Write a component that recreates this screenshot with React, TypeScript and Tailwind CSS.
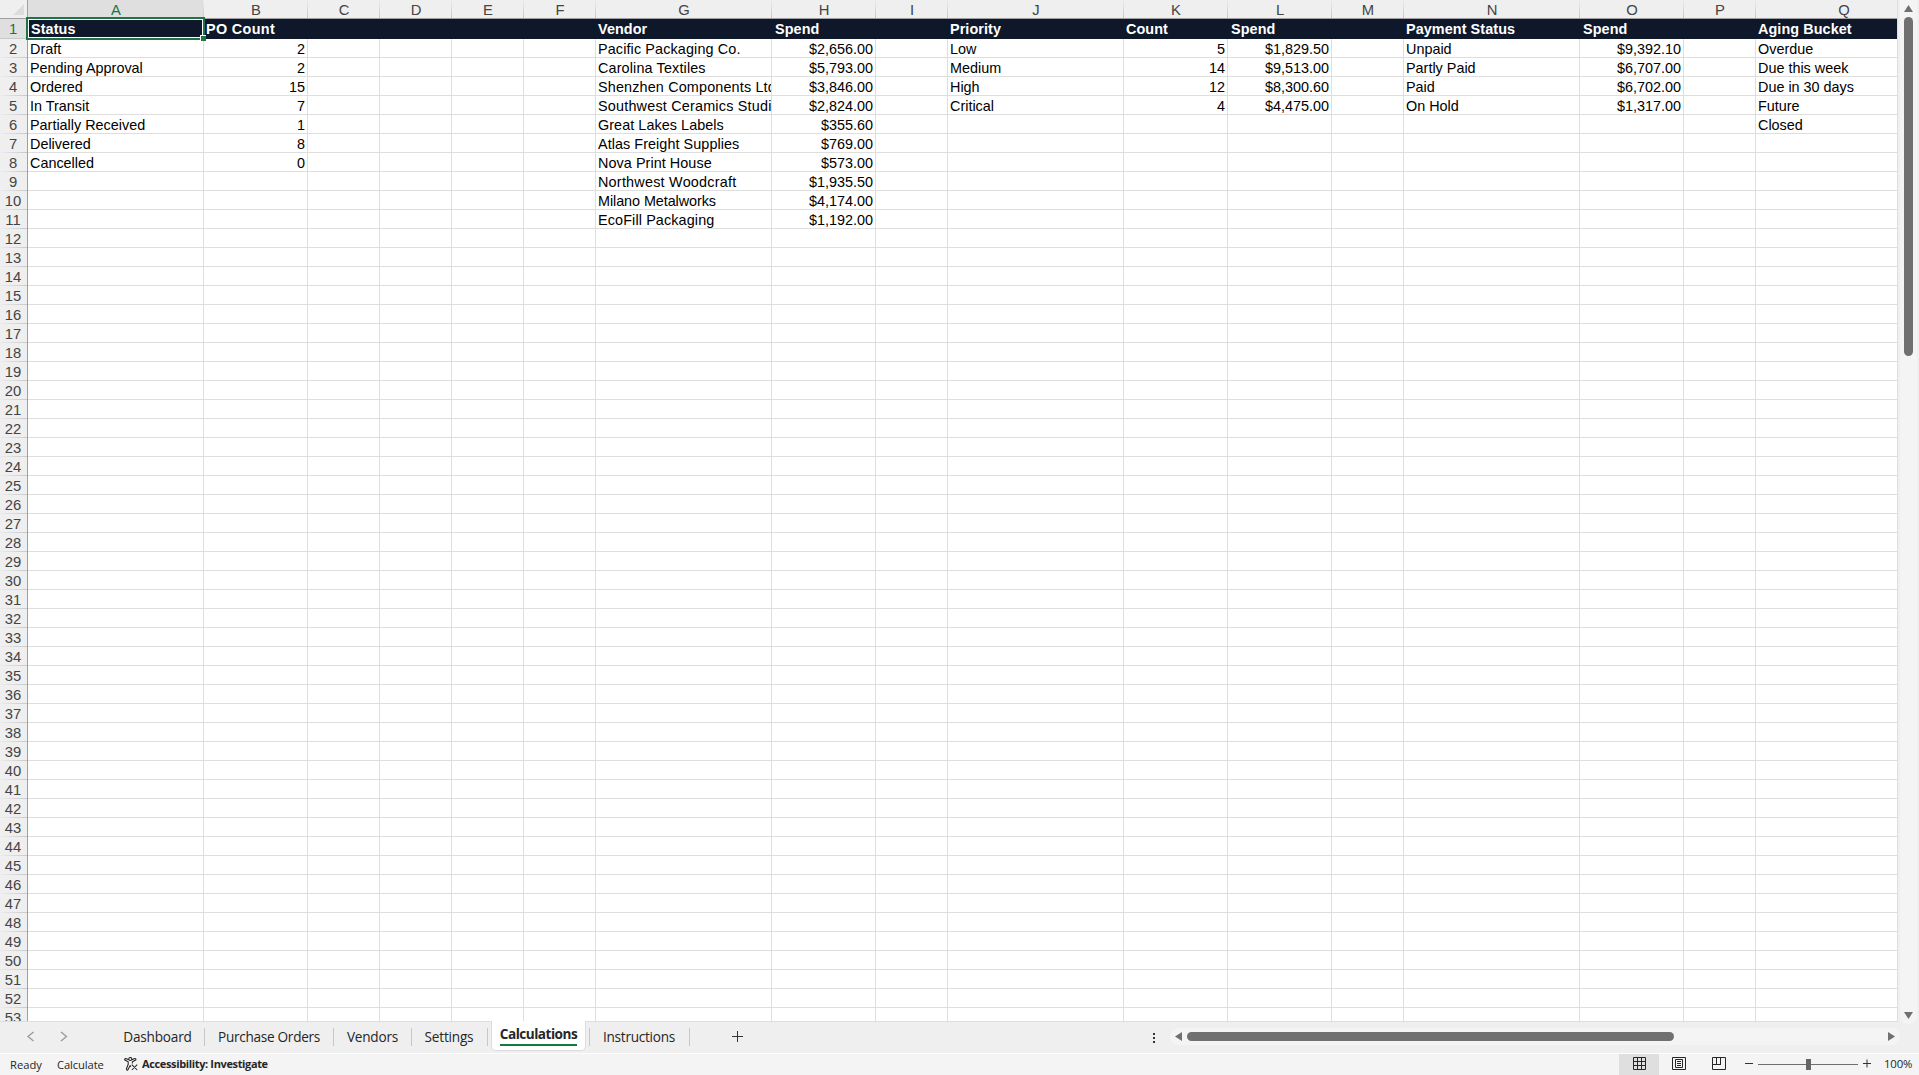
import type { ReactNode } from 'react';

type Column = { letter: string; width: string; numeric?: boolean; head?: string; cells?: string[]; tracking?: string[] };

const columns: Column[] = [
  { letter: 'A', width: 'w-44', head: 'Status', cells: ['Draft', 'Pending Approval', 'Ordered', 'In Transit', 'Partially Received', 'Delivered', 'Cancelled'] },
  { letter: 'B', width: 'w-26', numeric: true, head: 'PO Count', cells: ['2', '2', '15', '7', '1', '8', '0'] },
  { letter: 'C', width: 'w-18' },
  { letter: 'D', width: 'w-18' },
  { letter: 'E', width: 'w-18' },
  { letter: 'F', width: 'w-18' },
  {
    letter: 'G',
    width: 'w-44',
    head: 'Vendor',
    cells: ['Pacific Packaging Co.', 'Carolina Textiles', 'Shenzhen Components Ltd', 'Southwest Ceramics Studio', 'Great Lakes Labels', 'Atlas Freight Supplies', 'Nova Print House', 'Northwest Woodcraft', 'Milano Metalworks', 'EcoFill Packaging'],
    tracking: ['tracking-[0.12px]', 'tracking-[0.14px]', 'tracking-[0.15px]', 'tracking-[0.2px]', 'tracking-[0.06px]', 'tracking-[0.06px]', 'tracking-[0.06px]', 'tracking-[0.23px]', 'tracking-[-0.07px]', 'tracking-[0.12px]'],
  },
  {
    letter: 'H',
    width: 'w-26',
    numeric: true,
    head: 'Spend',
    cells: ['$2,656.00', '$5,793.00', '$3,846.00', '$2,824.00', '$355.60', '$769.00', '$573.00', '$1,935.50', '$4,174.00', '$1,192.00'],
  },
  { letter: 'I', width: 'w-18' },
  { letter: 'J', width: 'w-44', head: 'Priority', cells: ['Low', 'Medium', 'High', 'Critical'] },
  { letter: 'K', width: 'w-26', numeric: true, head: 'Count', cells: ['5', '14', '12', '4'] },
  { letter: 'L', width: 'w-26', numeric: true, head: 'Spend', cells: ['$1,829.50', '$9,513.00', '$8,300.60', '$4,475.00'] },
  { letter: 'M', width: 'w-18' },
  { letter: 'N', width: 'w-44', head: 'Payment Status', cells: ['Unpaid', 'Partly Paid', 'Paid', 'On Hold'] },
  { letter: 'O', width: 'w-26', numeric: true, head: 'Spend', cells: ['$9,392.10', '$6,707.00', '$6,702.00', '$1,317.00'] },
  { letter: 'P', width: 'w-18' },
  { letter: 'Q', width: 'w-44', head: 'Aging Bucket', cells: ['Overdue', 'Due this week', 'Due in 30 days', 'Future', 'Closed'] },
];

const bodyRows = Array.from({ length: 52 }, (_, i) => i);

function RowNumbers() {
  return (
    <div className="w-7 shrink-0 border-r border-[#9f9f9f] bg-[#efefef] text-center text-[14.8px] text-[#444]">
      <div className="flex h-[19px] items-end justify-end border-b border-[#9f9f9f] pr-[3px] pb-[3px]">
        <svg width="11" height="11" viewBox="0 0 11 11"><path d="M11 0V11H0Z" fill="#dcdcdc" /></svg>
      </div>
      <div className="h-5 border-b border-[#c8c8c8] bg-[#dfdfdf] pr-px leading-[20px] text-[#217346]">1</div>
      {bodyRows.map((r) => (
        <div key={r} className="flex h-[19px] flex-col">
          <div className="h-[18px] pr-px leading-[20px]">{r + 2}</div>
          <div className="h-px bg-linear-to-r from-[#ececec] to-[#c8c8c8]" />
        </div>
      ))}
    </div>
  );
}

function SheetColumn({ col }: { col: Column }) {
  const selected = col.letter === 'A';
  return (
    <div className={`${col.width} relative shrink-0`}>
      <div className={`h-[19px] border-b border-[#9f9f9f] text-center text-[14.8px] leading-[20px] ${selected ? 'bg-[#dfdfdf] text-[#217346]' : 'bg-[#efefef] text-[#444]'}`}>
        <div className="flex h-full justify-end">
          <span className="grow pl-px">{col.letter}</span>
          <span className="w-px bg-linear-to-b from-[#ececec] to-[#c8c8c8]" />
        </div>
      </div>
      <div className={`h-5 bg-[#0f172a] text-[14.4px] leading-[20px] font-bold whitespace-nowrap text-white ${col.head?.startsWith('S') ? 'pl-[3px]' : 'pl-0.5'} ${col.letter === 'B' ? 'tracking-[0.35px]' : 'tracking-[0.08px]'}`}>{col.head}</div>
      {bodyRows.map((r) => (
        <div key={r} className={`h-[19px] overflow-hidden border-r border-b border-[#dedede] bg-white pr-0.5 pl-0.5 text-[14.4px] leading-[20px] whitespace-nowrap text-black ${col.numeric ? 'text-right' : ''} ${col.tracking?.[r] ?? ''}`}>
          {col.cells?.[r]}
        </div>
      ))}
      {selected && (
        <div className="absolute top-[17px] -left-0.5 z-10 h-[23px] w-[179px] border-2 border-[#217346]">
          <div className="h-full border border-white" />
          <div className="absolute -right-[3px] -bottom-[3px] size-1.5 border-t border-l border-white bg-[#217346]" />
        </div>
      )}
    </div>
  );
}

function VerticalScroll() {
  return (
    <div className="relative z-10 flex h-[1024px] grow justify-center bg-[#efefef]">
      <div className="mr-px flex h-full w-[17px] flex-col items-center rounded-b-lg bg-[#f4f4f4] pt-[5px]">
        <svg width="9" height="7" viewBox="0 0 9 7"><path d="M4.5 0L9 7H0Z" fill="#707070" /></svg>
        <div className="mt-[5px] h-[339px] w-[9px] rounded-full bg-[#707070]" />
        <svg className="mt-auto mb-[5px]" width="9" height="7" viewBox="0 0 9 7"><path d="M0 0H9L4.5 7Z" fill="#707070" /></svg>
      </div>
    </div>
  );
}

function Tab({ children, className }: { children?: ReactNode; className: string }) {
  return (
    <div className={`mt-1.5 flex h-[18px] items-center justify-center self-start border-r border-[#c8c8c8] ${className}`}>{children}</div>
  );
}

function TabBar() {
  return (
    <div className="flex h-8 shrink-0 border-b border-white bg-[#efefef] font-['Open_Sans',sans-serif] text-[13.6px] tracking-[-0.2px] text-[#262626]">
      <div className="flex w-[90px] pt-[9px] pl-[27px]">
        <svg width="8" height="11" viewBox="0 0 8 11" fill="none" stroke="#999" strokeWidth="1.3"><path d="M6.5 1L1 5.5L6.5 10" /></svg>
        <svg className="ml-[25px]" width="8" height="11" viewBox="0 0 8 11" fill="none" stroke="#999" strokeWidth="1.3"><path d="M1 1L6.5 5.5L1 10" /></svg>
      </div>
      <div className="flex w-[401px]">
        <Tab className="ml-[21px] w-[94px]">Dashboard</Tab>
        <Tab className="w-[129px] tracking-[-0.28px]">Purchase Orders</Tab>
        <Tab className="w-[78px]">Vendors</Tab>
        <Tab className="w-[76px] pr-px">Settings</Tab>
      </div>
      <div className="relative -mt-px flex h-[30px] w-[95px] flex-col items-center rounded-b-[5px] border-x border-b border-[#dcdcdc] bg-white font-bold">
        <div className="mt-[3px] leading-[19px] tracking-[-0.5px]">Calculations</div>
        <div className="mt-px h-0.5 w-[77px] bg-[#107c41]" />
      </div>
      <div className="flex grow">
        <Tab className="w-1" />
        <Tab className="w-[100px] pr-px tracking-[-0.26px]">Instructions</Tab>
        <svg className="mt-[9px] ml-[42px]" width="11" height="11" viewBox="0 0 11 11" stroke="#333"><path d="M0 5.5H11M5.5 0V11" /></svg>
        <svg className="mt-[11px] ml-[410px]" width="2" height="10" viewBox="0 0 2 10" fill="#333"><path d="M0 0H2V2H0ZM0 4H2V6H0ZM0 8H2V10H0Z" /></svg>
        <div className="mt-1.5 ml-[15px] flex h-[17px] w-[730px] items-center rounded-full bg-[#f4f4f4] px-[5px]">
          <svg width="7" height="9" viewBox="0 0 7 9"><path d="M7 0V9L0 4.5Z" fill="#707070" /></svg>
          <div className="ml-[5px] h-[9px] w-[487px] rounded-full bg-[#707070]" />
          <svg className="ml-auto" width="7" height="9" viewBox="0 0 7 9"><path d="M0 0V9L7 4.5Z" fill="#707070" /></svg>
        </div>
      </div>
    </div>
  );
}

function StatusBar() {
  return (
    <div className="flex h-[21px] shrink-0 items-center bg-[#f4f4f4] font-['Open_Sans',sans-serif] text-[11.2px] text-[#262626]">
      <span className="ml-2.5 w-[47px] pt-px">Ready</span>
      <span className="w-[67px] pt-px tracking-[-0.1px]">Calculate</span>
      <svg className="mb-px" width="14" height="14" viewBox="0 0 14 14" fill="none" stroke="#262626" strokeWidth="1.05" strokeLinejoin="round">
        <circle cx="6.3" cy="2" r="1.5" />
        <path d="M4.8 2.7L1.8 1.5Q.3 1.6 .8 3L4.2 4.7V7.2L2.4 12Q2.6 13.6 3.8 13L6.2 8.6L7 9.8M7.8 2.7L10.8 1.5Q12.4 1.6 11.8 3L8.4 4.7V6.6M7.8 7.6L13.2 13M13.2 7.6L7.8 13" />
      </svg>
      <span className="ml-1 pb-px text-[11px] font-bold tracking-[-0.36px]">Accessibility: Investigate</span>
      <div className="ml-auto flex h-full w-[300px] items-center">
        <div className="flex h-full w-10 items-center justify-center bg-[#dfdfdf] pb-0.5">
          <svg width="13" height="13" viewBox="0 0 13 13" fill="none" stroke="#262626"><path d="M.5 .5H12.5V12.5H.5ZM4.5 0V13M8.5 0V13M0 4.5H13M0 8.5H13" /></svg>
        </div>
        <svg className="mb-0.5 ml-[13px]" width="14" height="13" viewBox="0 0 14 13" fill="none" stroke="#262626"><path d="M.5 .5H13.5V12.5H.5ZM3.5 2.5H10.5V10.5H3.5ZM5 4.5H9M5 6.5H9M5 8.5H9" /></svg>
        <svg className="mb-0.5 ml-[26px]" width="14" height="13" viewBox="0 0 14 13" fill="none" stroke="#262626"><path d="M.5 .5H13.5V12.5H.5ZM4.5 .5V7.5M8.5 .5V7.5M0 7.5H9" /></svg>
        <svg className="mb-0.5 ml-[19px]" width="126" height="13" viewBox="0 0 126 13" stroke="#333"><path d="M0 6.5H8M118 6.5H126M122 2.5V10.5" /><path d="M13 7.5H113" stroke="#707070" /><path d="M61 2H66V13H61Z" fill="#666" stroke="none" /></svg>
        <span className="ml-[13px] pb-px text-[11.4px] tracking-[-0.2px]">100%</span>
      </div>
    </div>
  );
}

export default function App() {
  return (
    <div className="flex h-[1075px] w-[1919px] flex-col overflow-hidden bg-[#efefef] font-['Liberation_Sans',Arial,sans-serif]">
      <div className="flex h-[1022px] shrink-0">
        <div className="flex h-full w-[1898px] shrink-0 overflow-hidden border-r border-b border-[#dedede]">
          <RowNumbers />
          {columns.map((col) => (
            <SheetColumn key={col.letter} col={col} />
          ))}
        </div>
        <VerticalScroll />
      </div>
      <TabBar />
      <StatusBar />
    </div>
  );
}
